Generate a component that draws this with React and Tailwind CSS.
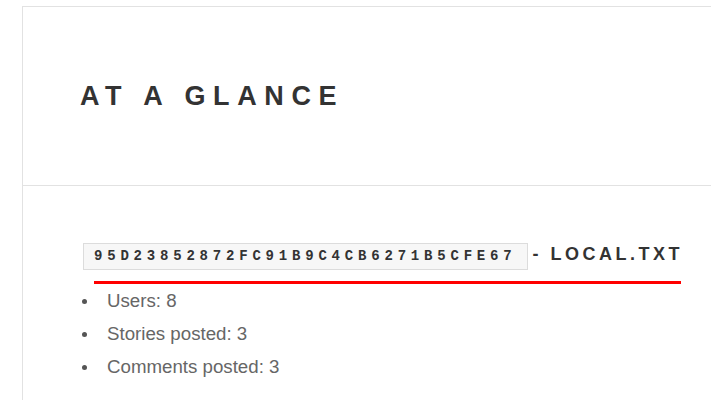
import React from 'react';

const stats = ['Users: 8', 'Stories posted: 3', 'Comments posted: 3'];

function App() {
  return (
    <div className="w-[711px] h-[400px] overflow-hidden bg-white font-['Liberation_Sans',Arial,sans-serif]">
      <div className="ml-[22px] mt-[6px] w-[760px] h-[420px] border-l border-t border-[#e2e2e2]">
        {/* header */}
        <div className="h-[179px] flex items-center pl-[57px] border-b border-[#e2e2e2]">
          <h2 className="text-[27px] leading-none font-bold tracking-[7.6px] text-[#333]">AT A GLANCE</h2>
        </div>

        {/* body */}
        <div className="pl-[60px] pt-[55px]">
          <div className="flex items-baseline">
            <code className="inline-block border border-[#dcdcdc] bg-[#f7f7f7] pl-[10px] pr-[11px] py-[4px] font-['Liberation_Mono','Courier_New',monospace] text-[14px] leading-[17px] font-bold tracking-[4.8px] text-[#333]">
              95D23852872FC91B9C4CB6271B5CFE67
            </code>
            <span className="ml-[4px] text-[18px] font-bold tracking-[3.5px] text-[#333]">- LOCAL.TXT</span>
          </div>
          <div className="ml-[11px] mt-[11px] w-[587px] h-[3px] bg-[#ff0000]" />
          <ul className="text-[18.7px] leading-[33px] text-[#666]">
            {stats.map((s) => (
              <li key={s} className="flex items-center">
                <span className="ml-[-1px] mr-[20px] w-[5px] h-[5px] rounded-full bg-[#555] mt-[2px]" />
                {s}
              </li>
            ))}
          </ul>
        </div>
      </div>
    </div>
  );
}

export default App;
